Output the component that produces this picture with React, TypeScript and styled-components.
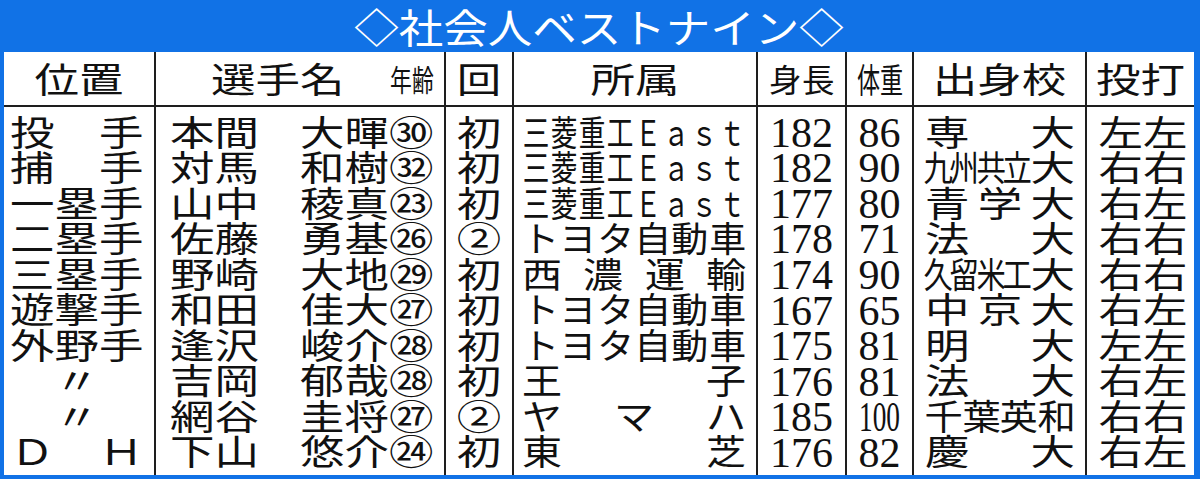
import React from "react";
import styled, { createGlobalStyle } from "styled-components";

const BLUE = "#1172E6";
const LINE = "#1e1e1e";
const ADV = 44.5;
const SY = 0.8;
const ROW_H = 35.56;

type ChSpec = { c: string; w: number; sx: number; sy: number };
type RunSpec = ChSpec[];

const ch = (c: string, w = ADV, sx = 1, sy = SY): ChSpec => ({ c, w, sx, sy });
const sp = (t: string, sx = 1, sy = SY): RunSpec[] => [...t].map((c) => [ch(c, ADV * sx, sx, sy)]);
const run = (t: string, w = ADV, sx = 1, sy = SY): RunSpec => [...t].map((c) => ch(c, w, sx, sy));

const Global = createGlobalStyle`
  html, body { margin: 0; padding: 0; background: #fff; }
  #root { width: 1200px; height: 479px; }
`;

const Page = styled.div`
  width: 1200px;
  height: 479px;
  box-sizing: border-box;
  background: ${BLUE};
  padding: 0 6px 4px 4px;
  display: flex;
  flex-direction: column;
  font-family: "Noto Sans CJK JP", "Noto Sans", sans-serif;
  font-size: ${ADV}px;
  line-height: ${ADV}px;
  color: #111;
`;

const TitleBar = styled.h1`
  margin: 0;
  height: 52px;
  flex: none;
  display: flex;
  align-items: center;
  justify-content: center;
  color: #fff;
  font-size: ${ADV}px;
  line-height: ${ADV}px;
  font-weight: 400;
`;

const Table = styled.div`
  flex: 1;
  display: flex;
  background: #fff;
`;

const Col = styled.div<{ $w: number; $first?: boolean }>`
  width: ${(p) => p.$w}px;
  flex: none;
  box-sizing: border-box;
  display: flex;
  flex-direction: column;
  border-left: ${(p) => (p.$first ? "none" : `2px solid ${LINE}`)};
`;

type Align = "between" | "center" | "start";
const justify = (a: Align) => (a === "between" ? "space-between" : a === "center" ? "center" : "flex-start");

const Head = styled.div<{ $pl: number; $pr: number; $align: Align }>`
  height: 53px;
  flex: none;
  border-bottom: 2px solid ${LINE};
  display: flex;
  align-items: center;
  justify-content: ${(p) => justify(p.$align)};
  padding: 0 ${(p) => p.$pr}px 0 ${(p) => p.$pl}px;
`;

const Body = styled.div`
  flex: 1;
  padding-top: 6px;
  display: flex;
  flex-direction: column;
`;

const Cell = styled.div<{ $pl: number; $pr: number; $align: Align }>`
  height: ${ROW_H}px;
  flex: none;
  display: flex;
  align-items: center;
  justify-content: ${(p) => justify(p.$align)};
  padding: 0 ${(p) => p.$pr}px 0 ${(p) => p.$pl}px;
`;

const Run = styled.span`
  display: flex;
  flex: none;
`;

const Ch = styled.span<{ $w: number; $sx: number; $sy: number }>`
  display: inline-flex;
  justify-content: center;
  flex: none;
  width: ${(p) => p.$w}px;
  white-space: pre;
  transform: scale(${(p) => p.$sx}, ${(p) => p.$sy});
`;

const Num = styled.span<{ $sx: number }>`
  display: inline-block;
  font-family: "Liberation Serif", "Times New Roman", serif;
  font-size: 42px;
  line-height: 42px;
  padding-top: 4px;
  transform: scaleX(${(p) => p.$sx});
`;

const Text = ({ runs }: { runs: RunSpec[] }) => (
  <>
    {runs.map((r, i) => (
      <Run key={i}>
        {r.map((s, j) => (
          <Ch key={j} $w={s.w} $sx={s.sx} $sy={s.sy}>
            {s.c}
          </Ch>
        ))}
      </Run>
    ))}
  </>
);

type Row = {
  pos: RunSpec[];
  fam: string;
  given: string;
  age: string;
  kai: string;
  team: RunSpec[];
  h: string;
  w: string;
  school: RunSpec[];
  bt: string;
};

const EAST = [run("三菱重工Ｅａｓｔ", 28, 0.6)];
const TOYOTA = [run("トヨタ自動車", 224 / 6, 0.83)];
const cond = (t: string, tail: string) => [[...run(t, 105.5 / t.length, 0.66), ch(tail)]];

const rows: Row[] = [
  { pos: sp("投手"), fam: "本間", given: "大暉", age: "㉚", kai: "初", team: EAST, h: "182", w: "86", school: sp("専大"), bt: "左左" },
  { pos: sp("捕手"), fam: "対馬", given: "和樹", age: "㉜", kai: "初", team: EAST, h: "182", w: "90", school: cond("九州共立", "大"), bt: "右右" },
  { pos: sp("一塁手"), fam: "山中", given: "稜真", age: "㉓", kai: "初", team: EAST, h: "177", w: "80", school: sp("青学大"), bt: "右左" },
  { pos: sp("二塁手"), fam: "佐藤", given: "勇基", age: "㉖", kai: "②", team: TOYOTA, h: "178", w: "71", school: sp("法大"), bt: "右右" },
  { pos: sp("三塁手"), fam: "野崎", given: "大地", age: "㉙", kai: "初", team: sp("西濃運輸", 0.9), h: "174", w: "90", school: cond("久留米工", "大"), bt: "右右" },
  { pos: sp("遊撃手"), fam: "和田", given: "佳大", age: "㉗", kai: "初", team: TOYOTA, h: "167", w: "65", school: sp("中京大"), bt: "右左" },
  { pos: sp("外野手"), fam: "逢沢", given: "峻介", age: "㉘", kai: "初", team: TOYOTA, h: "175", w: "81", school: sp("明大"), bt: "左左" },
  { pos: [run("〃")], fam: "吉岡", given: "郁哉", age: "㉘", kai: "初", team: sp("王子", 0.9), h: "176", w: "81", school: sp("法大"), bt: "右左" },
  { pos: [run("〃")], fam: "網谷", given: "圭将", age: "㉗", kai: "②", team: sp("ヤマハ", 0.9), h: "185", w: "100", school: [run("千葉英和", 37.5, 0.86)], bt: "右右" },
  { pos: sp("ＤＨ"), fam: "下山", given: "悠介", age: "㉔", kai: "初", team: sp("東芝", 0.9), h: "176", w: "82", school: sp("慶大"), bt: "右左" },
];

type Column = {
  w: number;
  head: React.ReactNode;
  headPad: [number, number];
  headAlign: Align;
  pad: [number, number];
  align: (r: Row) => Align;
  cell: (r: Row) => React.ReactNode;
};

const columns: Column[] = [
  {
    w: 150,
    head: <Text runs={[run("位置")]} />,
    headPad: [0, 0],
    headAlign: "center",
    pad: [6, 10.5],
    align: (r) => (r.pos.length === 1 && r.pos[0].length === 1 ? "center" : "between"),
    cell: (r) => <Text runs={r.pos} />,
  },
  {
    w: 290,
    head: <Text runs={[run("選手名"), run("年齢", 21.8, 0.49, 0.66)]} />,
    headPad: [55, 10.5],
    headAlign: "between",
    pad: [14, 10.5],
    align: () => "between",
    cell: (r) => <Text runs={[run(r.fam), run(r.given + r.age)]} />,
  },
  {
    w: 68,
    head: <Text runs={[run("回")]} />,
    headPad: [0, 0],
    headAlign: "center",
    pad: [0, 0],
    align: () => "center",
    cell: (r) => <Text runs={[run(r.kai)]} />,
  },
  {
    w: 244,
    head: <Text runs={[run("所属")]} />,
    headPad: [0, 0],
    headAlign: "center",
    pad: [8, 10],
    align: () => "between",
    cell: (r) => <Text runs={r.team} />,
  },
  {
    w: 89,
    head: <Text runs={[run("身長", 32.5, 0.73, 0.72)]} />,
    headPad: [0, 0],
    headAlign: "center",
    pad: [0, 0],
    align: () => "center",
    cell: (r) => <Num $sx={1}>{r.h}</Num>,
  },
  {
    w: 67,
    head: <Text runs={[run("体重", 23, 0.52, 0.77)]} />,
    headPad: [0, 0],
    headAlign: "center",
    pad: [0, 0],
    align: () => "center",
    cell: (r) => <Num $sx={r.w.length > 2 ? 0.65 : 1}>{r.w}</Num>,
  },
  {
    w: 173,
    head: <Text runs={[run("出身校")]} />,
    headPad: [0, 0],
    headAlign: "center",
    pad: [11, 10],
    align: () => "between",
    cell: (r) => <Text runs={r.school} />,
  },
  {
    w: 109,
    head: <Text runs={[run("投打")]} />,
    headPad: [0, 0],
    headAlign: "center",
    pad: [11.5, 0],
    align: () => "start",
    cell: (r) => <Text runs={[run(r.bt)]} />,
  },
];

export default function App() {
  return (
    <Page>
      <Global />
      <TitleBar>
        <Text runs={[run("◇社会人ベストナイン◇", ADV, 1, 0.9)]} />
      </TitleBar>
      <Table>
        {columns.map((col, i) => (
          <Col key={i} $w={col.w} $first={i === 0}>
            <Head $pl={col.headPad[0]} $pr={col.headPad[1]} $align={col.headAlign}>
              {col.head}
            </Head>
            <Body>
              {rows.map((r, j) => (
                <Cell key={j} $pl={col.pad[0]} $pr={col.pad[1]} $align={col.align(r)}>
                  {col.cell(r)}
                </Cell>
              ))}
            </Body>
          </Col>
        ))}
      </Table>
    </Page>
  );
}
